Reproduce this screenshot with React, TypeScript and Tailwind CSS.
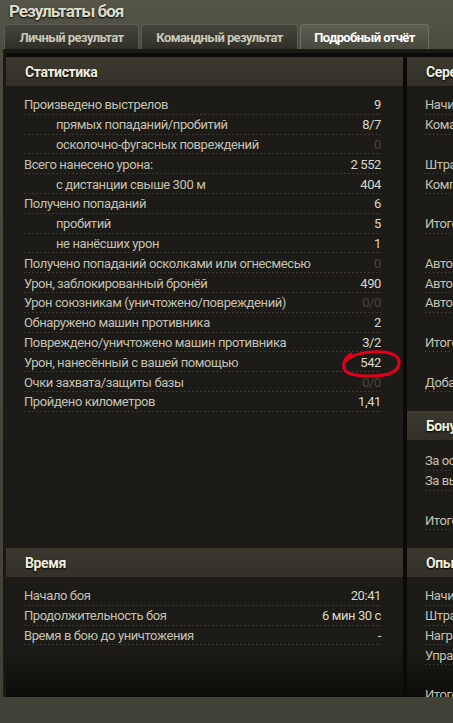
import React from 'react';

interface StatRow {
  label: string;
  value?: string;
  indent?: boolean;
  dim?: boolean;
  mark?: boolean;
}

const stats: StatRow[] = [
  { label: 'Произведено выстрелов', value: '9' },
  { label: 'прямых попаданий/пробитий', value: '8/7', indent: true },
  { label: 'осколочно-фугасных повреждений', value: '0', indent: true, dim: true },
  { label: 'Всего нанесено урона:', value: '2 552' },
  { label: 'с дистанции свыше 300 м', value: '404', indent: true },
  { label: 'Получено попаданий', value: '6' },
  { label: 'пробитий', value: '5', indent: true },
  { label: 'не нанёсших урон', value: '1', indent: true },
  { label: 'Получено попаданий осколками или огнесмесью', value: '0', dim: true },
  { label: 'Урон, заблокированный бронёй', value: '490' },
  { label: 'Урон союзникам (уничтожено/повреждений)', value: '0/0', dim: true },
  { label: 'Обнаружено машин противника', value: '2' },
  { label: 'Повреждено/уничтожено машин противника', value: '3/2' },
  { label: 'Урон, нанесённый с вашей помощью', value: '542', mark: true },
  { label: 'Очки захвата/защиты базы', value: '0/0', dim: true },
  { label: 'Пройдено километров', value: '1,41' },
];

const time: StatRow[] = [
  { label: 'Начало боя', value: '20:41' },
  { label: 'Продолжительность боя', value: '6 мин 30 с' },
  { label: 'Время в бою до уничтожения', value: '-' },
];

// правая колонка обрезана краем окна, значения не видны
const credits: string[] = [
  'Начислено за бой',
  'Командный бонус',
  '',
  'Штраф за урон союзникам',
  'Компенсация за урон',
  '',
  'Итого',
  '',
  'Автоматический ремонт',
  'Автоматическая зарядка',
  'Автоматическое пополнение',
  '',
  'Итого',
  '',
  'Добавлено в казну',
];

const bonus: string[] = ['За основную задачу', 'За выполнение', '', 'Итого'];

const xp: string[] = ['Начислено за бой', 'Штраф за урон союзникам', 'Награда за задачи', 'Управление', '', 'Итого'];

const dots =
  'bg-[linear-gradient(to_right,#57544a_1px,transparent_1px)] bg-[length:4px_1px] bg-bottom bg-repeat-x';

const RedMark = () => (
  <svg
    className="pointer-events-none absolute -right-[20px] -top-[6px]"
    width="59"
    height="28"
    viewBox="0 0 59 28"
    fill="none"
  >
    <path
      d="M4 11 C10 3, 30 1, 41 2 C53 3, 58 8, 57 14 C56 22, 45 26, 28 26 C14 26, 3 24, 2 18 C1 12, 4 7, 9 4"
      stroke="#e0001b"
      strokeWidth="3"
      strokeLinecap="round"
    />
  </svg>
);

const Row: React.FC<{ row: StatRow }> = ({ row }) => (
  <div className={`flex h-[19.8px] items-center justify-between ${dots}`}>
    <span className={`${row.indent ? 'pl-8' : ''} whitespace-nowrap text-[#c3c1b3]`}>{row.label}</span>
    <span className={`relative whitespace-nowrap ${row.dim ? 'text-[#48463e]' : 'text-[#dad8ca]'}`}>
      {row.value}
      {row.mark && <RedMark />}
    </span>
  </div>
);

const LabelRow: React.FC<{ label: string }> = ({ label }) =>
  label ? (
    <div className={`flex h-[19.8px] items-center whitespace-nowrap text-[#c3c1b3] ${dots}`}>{label}</div>
  ) : (
    <div className="h-[19.8px]" />
  );

const Header: React.FC<{ title: string; className?: string }> = ({ title, className = '' }) => (
  <div
    className={`flex h-[29px] shrink-0 items-center bg-[linear-gradient(to_bottom,#3b392f,#333028)] pl-[19px] text-[14px] font-bold tracking-[-0.4px] text-[#efeedf] [text-shadow:0_1px_2px_#000] ${className}`}
  >
    {title}
  </div>
);

const Tab: React.FC<{ title: string; width: string; active?: boolean }> = ({ title, width, active }) => (
  <div
    className={`${width} flex h-[25px] items-center justify-center rounded-t-[3px] border border-b-0 pt-px text-[13px] font-bold tracking-[-0.6px] ${
      active
        ? 'border-[#707062] bg-[linear-gradient(to_bottom,#5e5e52,#48483e)] text-white'
        : 'border-[#5a5b4e] bg-[linear-gradient(to_bottom,#46463c,#2f2f28)] text-[#c8c8b8]'
    }`}
  >
    {title}
  </div>
);

export default function App() {
  return (
    <div className="h-[723px] w-[453px] overflow-hidden bg-[linear-gradient(to_bottom,#55554a,#4a4a3f_60px,#414137)] text-[13px] leading-none tracking-[-0.4px] [font-family:Roboto,'DejaVu_Sans_Condensed',sans-serif]">
      {/* Заголовок окна */}
      <div className="h-6 pl-[9px] pt-[3px] text-[17px] font-bold tracking-[-1px] text-[#dcdccb] [text-shadow:0_1px_2px_#000]">
        Результаты боя
      </div>

      {/* Вкладки */}
      <div className="flex gap-0.5 pl-1">
        <Tab title="Личный результат" width="w-[135px]" />
        <Tab title="Командный результат" width="w-[157px]" />
        <Tab title="Подробный отчёт" width="w-[129px]" active />
      </div>

      {/* Основная панель */}
      <div className="ml-[3px] flex h-[648px] gap-1 border-l-[3px] border-t-4 border-[#1b1a15] bg-[#0b0a08] pt-1">
        {/* Левая колонка */}
        <div className="flex w-[397px] shrink-0 flex-col bg-[linear-gradient(to_bottom,#1d1b17_92%,#0d0c0a)]">
          <Header title="Статистика" />
          <div className="h-[458px] pl-[18px] pr-[22px] pt-[9px]">
            {stats.map((r, i) => (
              <Row key={i} row={r} />
            ))}
          </div>
          <Header title="Время" className="mt-1" />
          <div className="flex-1 pl-[18px] pr-[22px] pt-[9px]">
            {time.map((r, i) => (
              <Row key={i} row={r} />
            ))}
          </div>
        </div>

        {/* Правая колонка */}
        <div className="flex w-[300px] shrink-0 flex-col bg-[linear-gradient(to_bottom,#1d1b17_92%,#0d0c0a)]">
          <Header title="Серебро" />
          <div className="h-[321px] pl-[18px] pr-[22px] pt-[9px]">
            {credits.map((l, i) => (
              <LabelRow key={i} label={l} />
            ))}
          </div>
          <Header title="Бонусы" className="mt-1" />
          <div className="h-[104px] pl-[18px] pr-[22px] pt-[11px]">
            {bonus.map((l, i) => (
              <LabelRow key={i} label={l} />
            ))}
          </div>
          <Header title="Опыт" className="mt-1" />
          <div className="flex-1 overflow-hidden pl-[18px] pr-[22px] pt-[9px]">
            {xp.map((l, i) => (
              <LabelRow key={i} label={l} />
            ))}
          </div>
        </div>
      </div>
    </div>
  );
}
